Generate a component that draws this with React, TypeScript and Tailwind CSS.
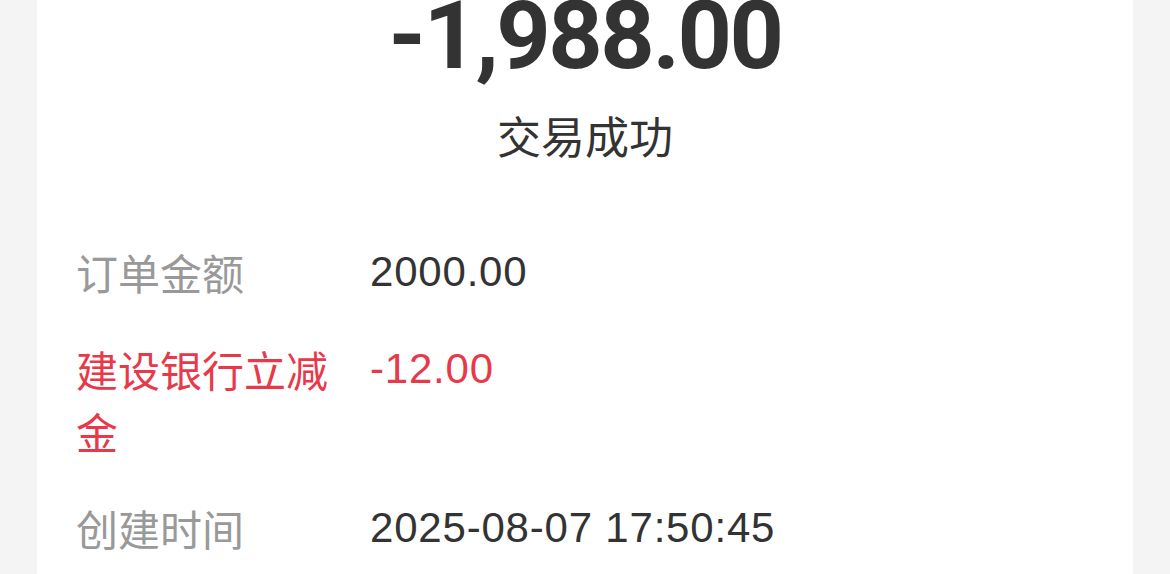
export default function App() {
  return (
    <div className="w-[1170px] h-[574px] overflow-hidden bg-[#f4f4f4] flex justify-center">
      <div className="w-[1096px] h-full bg-white flex flex-col">
        <div className="mt-[-12px] text-center text-[95px] leading-[95px] font-bold tracking-[-2.5px] text-[#333333] font-['Roboto',sans-serif]">
          -1,988.00
        </div>
        <div className="mt-[23px] text-center text-[44px] leading-[58px] text-[#333333] font-['Noto_Sans_CJK_SC',sans-serif]">
          交易成功
        </div>
        <div className="mt-[77px] px-[39px] flex flex-col gap-[35px] text-[42px] leading-[62px]">
          <div className="flex">
            <div className="w-[294px] shrink-0 text-[#999999] font-['Noto_Sans_CJK_SC',sans-serif]">订单金额</div>
            <div className="text-[#333333] tracking-[0.8px] font-['Liberation_Sans','Noto_Sans_CJK_SC',sans-serif]">2000.00</div>
          </div>
          <div className="flex">
            <div className="w-[294px] shrink-0 pr-[40px] text-[#e8394a] font-['Noto_Sans_CJK_SC',sans-serif]">建设银行立减金</div>
            <div className="text-[#e8394a] tracking-[0.8px] font-['Liberation_Sans','Noto_Sans_CJK_SC',sans-serif]">-12.00</div>
          </div>
          <div className="flex">
            <div className="w-[294px] shrink-0 text-[#999999] font-['Noto_Sans_CJK_SC',sans-serif]">创建时间</div>
            <div className="text-[#333333] tracking-[0.8px] font-['Liberation_Sans','Noto_Sans_CJK_SC',sans-serif]">2025-08-07 17:50:45</div>
          </div>
        </div>
      </div>
    </div>
  );
}
